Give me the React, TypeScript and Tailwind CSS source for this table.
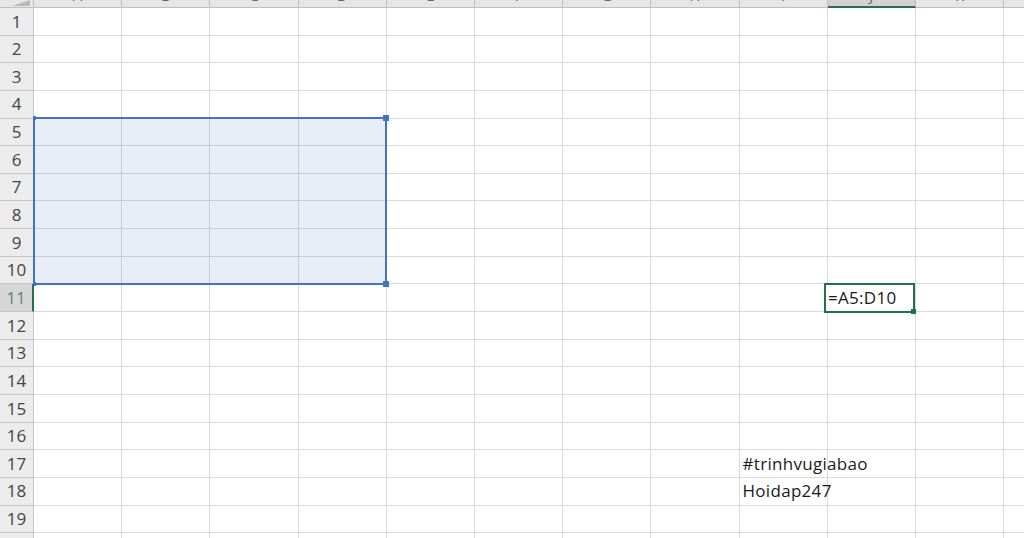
import React from "react";

const cols = ["A", "B", "C", "D", "E", "F", "G", "H", "I", "J", "K", "L"];
const rows = Array.from({ length: 20 }, (_, i) => i + 1);

const cellText: Record<string, string> = {
  "I17": "#trinhvugiabao",
  "I18": "Hoidap247",
};

export default function App() {
  return (
    <div className="relative h-[538px] w-[1024px] overflow-hidden bg-white font-['Open_Sans',sans-serif]">
      <div className="grid grid-cols-[34px_repeat(12,88.2px)] grid-rows-[8px_repeat(20,27.65px)]">
        {/* corner */}
        <div className="relative overflow-hidden border-b border-r border-[#bfbfbf] bg-[#e6e6e6]">
          <div className="absolute bottom-[1px] right-[3px] h-0 w-0 border-b-[6px] border-l-[18px] border-b-[#b9b9b9] border-l-transparent" />
        </div>
        {cols.map((c) => (
          <div
            key={c}
            className={
              c === "J"
                ? "flex items-end justify-center overflow-hidden border-b-2 border-r border-b-[#217346] border-r-[#bfbfbf] bg-[#d2d2d2] pb-[3px]"
                : "flex items-end justify-center overflow-hidden border-b border-r border-[#bfbfbf] bg-[#e6e6e6] pb-[4px]"
            }
          >
            <span className="text-[15px] leading-none text-[#666]">{c}</span>
          </div>
        ))}

        {rows.map((r) => (
          <React.Fragment key={r}>
            <div
              className={
                r === 11
                  ? "flex items-center justify-center border-b border-r-2 border-b-[#c6c6c6] border-r-[#217346] bg-[#d6d6d6] text-[17px] text-[#5a8a68]"
                  : "flex items-center justify-center border-b border-r border-[#c6c6c6] bg-[#ececec] text-[17px] text-[#444]"
              }
            >
              {r}
            </div>
            {cols.map((c) => (
              <div
                key={c}
                className="flex items-center overflow-visible whitespace-nowrap border-b border-r border-[#dadada] pl-[3px] text-[17px] tracking-[0.3px] text-[#1a1a1a]"
              >
                {cellText[`${c}${r}`]}
              </div>
            ))}
          </React.Fragment>
        ))}
      </div>

      {/* selected range A5:D10 */}
      <div className="pointer-events-none absolute left-[33px] top-[117px] h-[168px] w-[354px] border-2 border-[#4472c4] bg-[#4472c4]/[0.12]">
        <span className="absolute -left-[2px] -top-[3px] h-[4px] w-[3px] bg-[#4472c4]" />
        <span className="absolute -right-[4px] -top-[4px] h-[6px] w-[6px] bg-[#4472c4]" />
        <span className="absolute -left-[2px] -bottom-[3px] h-[4px] w-[3px] bg-[#4472c4]" />
        <span className="absolute -right-[4px] -bottom-[4px] h-[6px] w-[6px] bg-[#4472c4]" />
      </div>

      {/* active cell J11 */}
      <div className="absolute left-[824px] top-[283px] flex h-[30px] w-[91px] items-center border-2 border-[#217346] bg-white pl-[2px] text-[17px] tracking-[0.3px] text-[#1a1a1a]">
        =A5:D10
        <span className="absolute -bottom-[3px] -right-[3px] h-[5px] w-[5px] bg-[#217346]" />
      </div>
    </div>
  );
}
